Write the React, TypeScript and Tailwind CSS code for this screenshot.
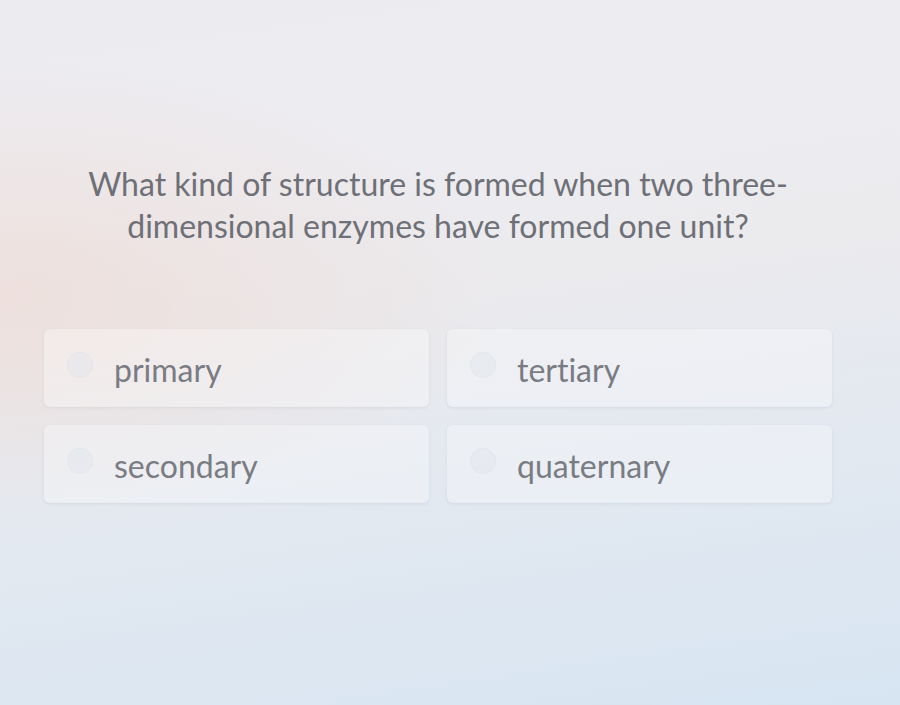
import React from 'react';

const options = [
    { id: 'a', label: 'primary' },
    { id: 'c', label: 'tertiary' },
    { id: 'b', label: 'secondary' },
    { id: 'd', label: 'quaternary' },
];

function OptionCard({ label }: { label: string }) {
    return (
        <label className="flex items-center h-[78px] rounded-md bg-white/30 shadow-[0_1px_3px_rgba(120,130,150,0.15)] pl-[23px] cursor-pointer">
            <span className="w-[26px] h-[26px] rounded-full bg-[#e2e6eb]/50 border border-[#e3e7ec] shrink-0 -translate-y-[3px]" />
            <span className="ml-[21px] text-[32px] text-[#797c83] leading-none pt-[3px] [font-variant-ligatures:none]">{label}</span>
        </label>
    );
}

export default function App() {
    return (
        <div className="w-[900px] h-[705px] overflow-hidden bg-[linear-gradient(172deg,#ecebf0_0%,#edecf0_25%,#ebeaed_42%,#e4e9f0_62%,#d7e5f2_100%)] font-['Lato','Open_Sans',sans-serif]">
            <div className="w-full h-full bg-[radial-gradient(ellipse_at_0%_42%,rgba(238,216,208,0.6),transparent_40%)]">
                <div className="ml-[44px] w-[788px] pt-[163px]">
                    <h1 className="max-w-[760px] mx-auto text-center text-[32px] leading-[42px] text-[#6e7077] font-normal [font-variant-ligatures:none]">
                        What kind of structure is formed when two three-dimensional enzymes have formed one unit?
                    </h1>

                    <div className="grid grid-cols-2 gap-x-[18px] gap-y-[18px] mt-[82px]">
                        {options.map((opt) => (
                            <OptionCard key={opt.id} label={opt.label} />
                        ))}
                    </div>
                </div>
            </div>
        </div>
    );
}
